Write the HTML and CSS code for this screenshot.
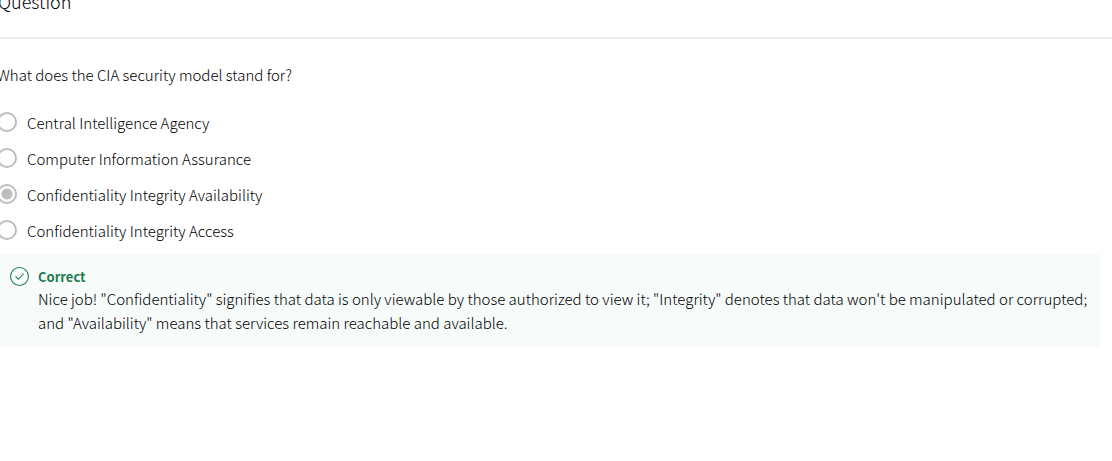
FILE: index.html
```html
<!DOCTYPE html>
<html lang="en">
<head>
<meta charset="utf-8">
<title>Question</title>
<link rel="stylesheet" href="styles.css">
</head>
<body>
<header class="header"><h1 class="title">Question</h1></header>
<main class="quiz">
<form>
<fieldset class="question">
<legend class="prompt">What does the CIA security model stand for?</legend>
<label class="option"><input class="radio" type="radio" name="answer"><span>Central Intelligence Agency</span></label>
<label class="option"><input class="radio" type="radio" name="answer"><span>Computer Information Assurance</span></label>
<label class="option"><input class="radio" type="radio" name="answer" checked><span>Confidentiality Integrity Availability</span></label>
<label class="option"><input class="radio" type="radio" name="answer"><span>Confidentiality Integrity Access</span></label>
</fieldset>
</form>
<section class="feedback">
<svg class="check" viewBox="0 0 20 20" aria-hidden="true"><circle cx="10" cy="10" r="9.4"/><path d="M5.8 9.8l3 3.2 5.4-6"/></svg>
<div class="message">
<h2 class="verdict">Correct</h2>
<p class="explanation">Nice job! "Confidentiality" signifies that data is only viewable by those authorized to view it; "Integrity" denotes that data won't be manipulated or corrupted; and "Availability" means that services remain reachable and available.</p>
</div>
</section>
</main>
</body>
</html>
```
FILE: styles.css
```css
* { box-sizing: border-box; }
body { margin: 0; background: #fff; color: #000; font: 300 15px/24px "Source Sans Pro", "Noto Sans CJK SC", "Noto Sans", sans-serif; overflow-x: hidden; }
.header { display: flex; padding-bottom: 24px; border-bottom: 2px solid #eee; }
.title { margin: -11px 0 0 -2px; font-size: 18px; font-weight: 300; line-height: 24px; }
.quiz { padding: 24px 12px 0 0; }
.question { margin: 0 0 0 -3px; padding: 0; border: 0; }
.prompt { padding: 0; margin-bottom: 24px; color: #000; }
.option { display: flex; align-items: flex-start; gap: 10px; margin-bottom: 12px; }
.option:last-child { margin-bottom: 11px; }
.radio { appearance: none; flex: none; width: 20px; height: 20px; margin: 1px 0 0; border: 2px solid #bdbdbd; border-radius: 50%; }
.radio:checked { background: radial-gradient(circle, #bdbdbd 5px, transparent 6px); }
.feedback { display: flex; gap: 9px; padding: 12px 10px; background: #f7fbfa; }
.check { flex: none; width: 19px; height: 19px; margin-top: 1px; fill: none; stroke: #1d7c50; stroke-width: 1.1; }
.verdict { margin: 0; color: #1d7c50; font-size: 13px; font-weight: 700; line-height: 21px; }
.explanation { margin: 0; }
```
